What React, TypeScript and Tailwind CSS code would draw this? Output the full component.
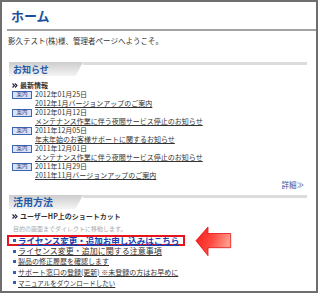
import React from "react";

const news = [
  { date: "2012年01月25日", title: "2012年1月バージョンアップのご案内" },
  { date: "2012年01月12日", title: "メンテナンス作業に伴う夜間サービス停止のお知らせ" },
  { date: "2011年12月05日", title: "年末年始のお客様サポートに関するお知らせ" },
  { date: "2011年12月01日", title: "メンテナンス作業に伴う夜間サービス停止のお知らせ" },
  { date: "2011年11月29日", title: "2011年11月バージョンアップのご案内" },
];

function Chevrons() {
  return (
    <svg width="6" height="5" viewBox="0 0 6 5" className="mr-[2px] shrink-0">
      <path d="M0.5 0.5 L2.5 2.5 L0.5 4.5 M3 0.5 L5 2.5 L3 4.5" stroke="#2a2a4a" strokeWidth="1.2" fill="none" />
    </svg>
  );
}

function Header({ label, size }: { label: string; size: string }) {
  return (
    <div className="flex ml-[7px] mr-[9px] h-[14px]">
      <div
        className={`w-[74px] h-full [clip-path:polygon(0_0,100%_0,90%_100%,0_100%)] bg-linear-to-b from-[#cdcdcd] to-[#f4f4f4] flex items-center pl-[4px] font-bold text-[#1f59a8] leading-none ${size}`}
      >
        {label}
      </div>
      <div className="flex-1 h-[3px] bg-[#dcdcdc]" />
    </div>
  );
}

function Bullet() {
  return <span className="w-[3px] h-[3px] bg-[#2f5fb8] mr-[2px] shrink-0" />;
}

export default function App() {
  return (
    <div className="w-[318px] h-[293px] border-2 border-[#6e6e6e] bg-white relative overflow-hidden [font-family:'Noto_Sans_CJK_JP',sans-serif] text-[#333]">
      <div className="flex flex-col">
        <div className="h-[27px] flex items-center pl-[9px] text-[13px] font-bold text-[#1e4f9c] leading-none">
          ホーム
        </div>
        <div className="ml-[5px] h-[2px] bg-[#a3a3a3]" />
        <div className="h-[19px] flex items-center pl-[6px] text-[7.5px] leading-none">
          影久テスト(株)様、管理者ページへようこそ。
        </div>

        <div className="mt-[12px]">
          <Header label="お知らせ" size="text-[9px]" />
        </div>

        <div className="mt-[5px] h-[9px] flex items-center pl-[10px] text-[7px] font-bold leading-none">
          <Chevrons />
          最新情報
        </div>

        <div className="flex flex-col">
          {news.map((n) => (
            <div key={n.date + n.title} className="flex flex-col">
              <div className="h-[9px] flex items-center pl-[10px] text-[7px] leading-none">
                <span className="w-[20px] h-[8px] border border-[#3e64b0] bg-[#d8e4f6] text-[#2a4a9a] text-[5.5px] flex items-center justify-center mr-[3px] shrink-0 leading-none">
                  案内
                </span>
                {n.date}
              </div>
              <div className="h-[9px] flex items-center pl-[33px] text-[7px] leading-none">
                <span className="underline underline-offset-[1px]">{n.title}</span>
              </div>
            </div>
          ))}
        </div>

        <div className="h-[10px] flex items-center justify-end pr-[12px] text-[7.5px] text-[#3b4fa0] leading-none">
          詳細≫
        </div>

        <div className="mt-[5px]">
          <Header label="活用方法" size="text-[10px]" />
        </div>

        <div className="mt-[3px] h-[9px] flex items-center pl-[10px] text-[7px] font-bold leading-none">
          <Chevrons />
          ユーザーHP上のショートカット
        </div>
        <div className="mt-[3px] h-[9px] flex items-center pl-[11px] text-[6px] text-[#aaaaaa] leading-none">
          目的の画面までダイレクトに移動します。
        </div>

        <div className="mt-[2px] ml-[5px] w-[178px] h-[11px] border-2 border-[#e8141b] flex items-center pl-[4px] text-[8.5px] font-bold text-[#1a3fb0] leading-none">
          <Bullet />
          <span className="underline underline-offset-[1px]">ライセンス変更・追加お申し込みはこちら</span>
        </div>
        <div className="h-[10.5px] flex items-center pl-[11px] text-[8px] leading-none">
          <Bullet />
          <span className="underline underline-offset-[1px]">ライセンス変更・追加に関する注意事項</span>
        </div>
        <div className="h-[10.5px] flex items-center pl-[11px] text-[7px] leading-none">
          <Bullet />
          <span className="underline underline-offset-[1px]">製品の修正履歴を確認します</span>
        </div>
        <div className="h-[10.5px] flex items-center pl-[11px] text-[7px] leading-none">
          <Bullet />
          <span className="underline underline-offset-[1px]">サポート窓口の登録(更新) ※未登録の方はお早めに</span>
        </div>
        <div className="h-[10.5px] flex items-center pl-[11px] text-[6.5px] leading-none">
          <Bullet />
          <span className="underline underline-offset-[1px]">マニュアルをダウンロードしたい</span>
        </div>
      </div>

      <svg
        className="absolute left-[192px] top-[224px]"
        width="39"
        height="31"
        viewBox="0 0 39 31"
      >
        <defs>
          <linearGradient id="arrowGrad" x1="0" y1="0" x2="1" y2="0.3">
            <stop offset="0" stopColor="#f01818" />
            <stop offset="0.55" stopColor="#ff4a40" />
            <stop offset="1" stopColor="#ff9a8a" />
          </linearGradient>
        </defs>
        <path
          d="M2 14.7 L14 1 L14 7.5 L36.7 7.5 L36.7 21.7 L14 21.7 L14 29.7 Z"
          fill="url(#arrowGrad)"
          stroke="#e01010"
          strokeWidth="0.8"
          strokeLinejoin="miter"
        />
      </svg>
    </div>
  );
}
